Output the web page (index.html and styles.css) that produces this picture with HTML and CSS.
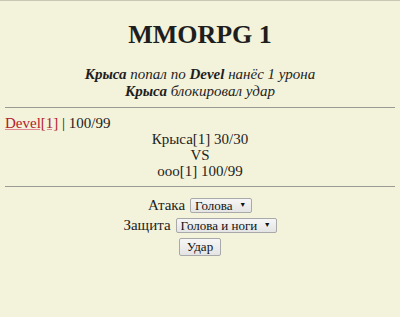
FILE: index.html
```html
<!DOCTYPE html>
<html lang="ru">
<head>
  <meta charset="UTF-8">
  <meta name="viewport" content="width=device-width, initial-scale=1.0">
  <title>MMORPG 1</title>
  <link rel="stylesheet" href="styles.css">
</head>
<body>
  <h1>MMORPG 1</h1>

  <div class="log">
    <div><b>Крыса</b> попал по <b>Devel</b> нанёс 1 урона</div>
    <div><b>Крыса</b> блокировал удар</div>
  </div>

  <hr>

  <div class="player"><a href="#">Devel[1]</a> | 100/99</div>

  <div class="fight">
    <div>Крыса[1] 30/30</div>
    <div>VS</div>
    <div>ooo[1] 100/99</div>
  </div>

  <hr>

  <form class="attack">
    <div class="form-row">
      <label for="attack">Атака</label>
      <span class="select">
        <select id="attack">
          <option>Голова</option>
        </select>
      </span>
    </div>
    <div class="form-row">
      <label for="defence">Защита</label>
      <span class="select">
        <select id="defence">
          <option>Голова и ноги</option>
        </select>
      </span>
    </div>
    <div class="form-row">
      <button type="button">Удар</button>
    </div>
  </form>
</body>
</html>
```

FILE: styles.css
```css
html {
  background-color: #f3f2da;
  border-top: 1px solid #c8c7b4;
}
body {
  font-family: "Liberation Serif", "DejaVu Serif", serif;
  font-size: 15px;
  color: #1e1e1e;
  margin: 0;
  padding: 0 5px;
  line-height: 16px;
}
h1 {
  text-align: center;
  font-size: 26px;
  line-height: 32px;
  margin: 18px 0 0;
}
.log {
  margin-top: 15px;
  text-align: center;
  font-style: italic;
  line-height: 17px;
}
hr {
  border: none;
  border-top: 1px solid #9a9a94;
  margin: 7px 0;
}
.player a {
  color: #b3202c;
  text-decoration-color: #e08a94;
}
.fight {
  text-align: center;
}
.attack {
  display: flex;
  flex-direction: column;
  align-items: center;
  gap: 5px;
  padding-top: 4px;
}
.form-row {
  display: flex;
  align-items: center;
  gap: 5px;
}
.form-row label {
  line-height: 15px;
}
.select {
  position: relative;
  display: block;
}
.select::after {
  content: "▼";
  position: absolute;
  right: 6px;
  top: 4px;
  font-size: 7px;
  line-height: 7px;
  color: #111;
  pointer-events: none;
}
select, button {
  font-family: "Liberation Serif", serif;
  font-size: 13px;
  background: linear-gradient(#f6f6f6, #e4e4e4);
  border: 1px solid #a9a9a9;
  border-radius: 2px;
  color: #111;
  display: block;
}
select {
  height: 15px;
  line-height: 13px;
  appearance: none;
  -webkit-appearance: none;
  padding: 0 18px 0 4px;
}
button {
  height: 18px;
  padding: 0 7px;
}
```
